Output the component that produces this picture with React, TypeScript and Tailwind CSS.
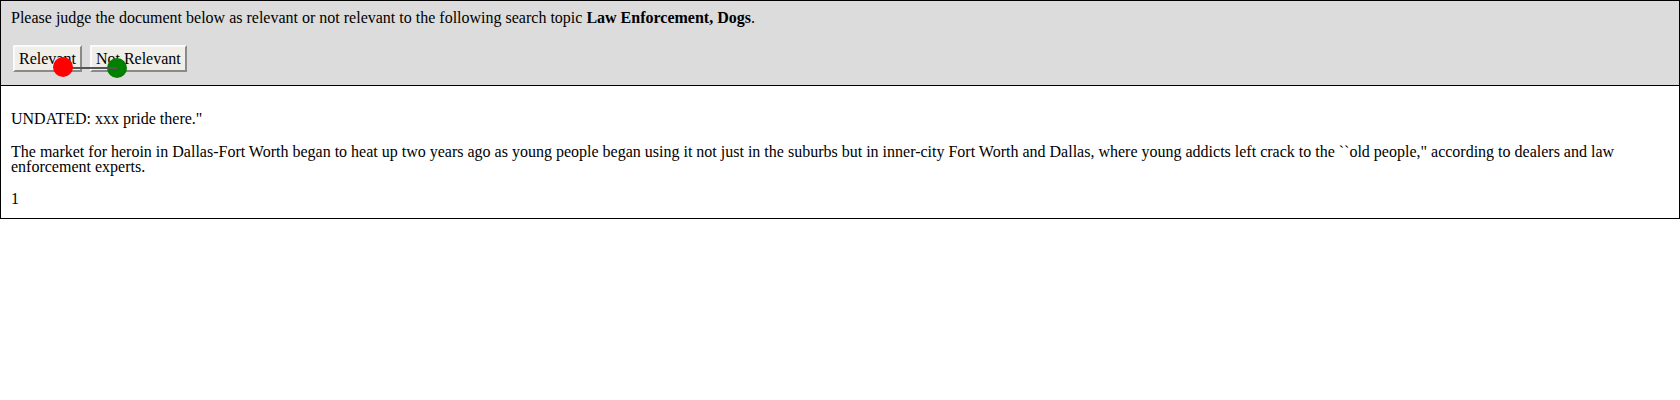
import React from 'react';

export default function App() {
  return (
    <div className="w-[1680px] bg-white text-black font-['Liberation_Serif',serif] text-[16px]">
      <div className="border border-black">
        {/* Question header */}
        <div className="relative bg-[#dcdcdc] border-b border-black px-[10px] pt-[8px] pb-[13px]">
          <div className="leading-[18px]">
            Please judge the document below as relevant or not relevant to the following search topic{' '}
            <b>Law Enforcement, Dogs</b>.
          </div>
          <div className="mt-[18px] flex gap-[8px] pl-[2px]">
            <button className="h-[27px] px-[4px] bg-[#f0eee9] border-2 border-t-[#fbfaf8] border-l-[#fbfaf8] border-b-[#8a8a8a] border-r-[#8a8a8a] leading-[18px]">
              Relevant
            </button>
            <button className="h-[27px] px-[4px] bg-[#f0eee9] border-2 border-t-[#fbfaf8] border-l-[#fbfaf8] border-b-[#8a8a8a] border-r-[#8a8a8a] leading-[18px]">
              Not Relevant
            </button>
          </div>
          {/* gaze / click markers */}
          <svg className="absolute left-0 top-0 pointer-events-none" width="140" height="84">
            <circle cx="116" cy="67" r="10" fill="#008000" />
            <line x1="62" y1="67" x2="116" y2="67" stroke="#555" strokeWidth="2" />
            <circle cx="62" cy="66" r="10" fill="#ff0000" />
          </svg>
        </div>

        {/* Document body */}
        <div className="px-[10px] pt-[9px] pb-[12px] leading-[15px]">
          <p className="mt-[16px]">UNDATED: xxx pride there.&quot;</p>
          <p className="mt-[18px]">
            The market for heroin in Dallas-Fort Worth began to heat up two years ago as young people began using it not just in the suburbs but in inner-city Fort Worth and Dallas, where young addicts left crack to the ``old people,&quot; according to dealers and law enforcement experts.
          </p>
          <p className="mt-[17px]">1</p>
        </div>
      </div>
    </div>
  );
}
